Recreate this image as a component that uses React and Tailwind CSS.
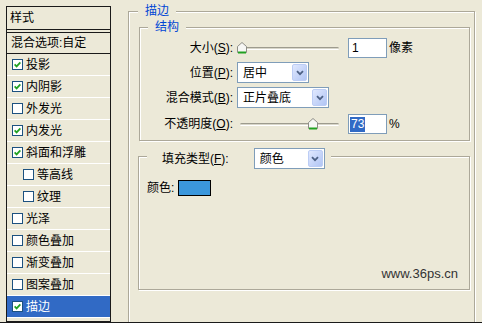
import React from 'react';

const styles = [
	{ t: '投影', c: true },
	{ t: '内阴影', c: true },
	{ t: '外发光' },
	{ t: '内发光', c: true },
	{ t: '斜面和浮雕', c: true },
	{ t: '等高线', sub: true },
	{ t: '纹理', sub: true },
	{ t: '光泽' },
	{ t: '颜色叠加' },
	{ t: '渐变叠加' },
	{ t: '图案叠加' },
	{ t: '描边', c: true, sel: true },
];

function Check({ checked }) {
	return (
		<span className="flex h-[11px] w-[11px] shrink-0 items-center justify-center border border-[#1c5180] bg-white">
			{checked && (
				<svg width="7" height="7" viewBox="0 0 7 7">
					<path d="M0.6 3.4 L2.6 5.4 L6.4 1.4" stroke="#21a121" strokeWidth="1.8" fill="none" />
				</svg>
			)}
		</span>
	);
}

function Select({ value, w }) {
	return (
		<div className={`flex h-[21px] items-center border border-[#7f9db9] bg-white pl-[5px] pr-[1px] ${w}`}>
			<span className="flex-1">{value}</span>
			<span className="flex h-[17px] w-[15px] items-center justify-center rounded-[2px] border border-[#bccdf5] bg-linear-to-br from-[#e0e8fe] to-[#b1c5f4]">
				<svg width="8" height="6" viewBox="0 0 8 6">
					<path d="M1 1.2 L4 4.2 L7 1.2" stroke="#4d6185" strokeWidth="1.8" fill="none" />
				</svg>
			</span>
		</div>
	);
}

function Slider({ pos }) {
	return (
		<div className="relative ml-[4px] flex h-[20px] w-[104px] items-center pl-[3px] pr-[2px]">
			<div className="h-[3px] w-full rounded-full border-t border-[#9d9b8e] border-b border-b-white bg-[#d8d6c9]" />
			<svg className={`absolute top-[4px] ${pos}`} width="10" height="12" viewBox="0 0 10 12">
				<path d="M0.5 4.5 L5 0.5 L9.5 4.5 L9.5 10.5 L0.5 10.5 Z" fill="#f7f7f4" stroke="#8d8d86" />
				<path d="M1 10.5 L9 10.5" stroke="#21a121" strokeWidth="2" />
			</svg>
		</div>
	);
}

export default function App() {
	return (
		<div className="flex h-[323px] w-[482px] overflow-hidden border-b border-[#1a1a1a] bg-[#ece9d8] font-['Liberation_Sans','Noto_Sans_CJK_SC',sans-serif] text-[12px] leading-[14px] text-black">
			{/* style list */}
			<div className="ml-[6px] mt-[6px] flex h-[316px] w-[105px] flex-col border border-[#1a1a1a]">
				<div className="flex h-[23px] items-center border-b border-[#1a1a1a] pl-[3px]">样式</div>
				<div className="mt-[2px] flex h-[22px] items-center border-y border-[#1a1a1a] pl-[4px]">混合选项:自定</div>
				{styles.map((s) => (
					<div
						key={s.t}
						className={`flex h-[22px] items-center gap-[3px] border-b border-white ${s.sub ? 'pl-[16px]' : 'pl-[5px]'} ${s.sel ? 'bg-[#316ac5] text-white' : ''}`}
					>
						<Check checked={s.c} />
						<span>{s.t}</span>
					</div>
				))}
			</div>

			{/* stroke settings */}
			<fieldset className="ml-[17px] mt-[4px] h-[340px] w-[347px] border border-[#aca899] shadow-[inset_1px_1px_0_#fff,1px_1px_0_#fff]">
				<legend className="ml-[9px] h-[14px] bg-[#ece9d8] px-[7px] leading-[14px] text-[#0046d5]">描边</legend>

				<fieldset className="ml-[10px] mt-[2px] w-[331px] border border-[#aca899] pb-[6px] shadow-[inset_1px_1px_0_#fff,1px_1px_0_#fff]">
					<legend className="ml-[8px] h-[14px] bg-[#ece9d8] px-[7px] leading-[14px] text-[#0046d5]">结构</legend>

					<div className="mt-[4px] flex h-[20px] items-center">
						<div className="w-[93px] text-right">大小(<u>S</u>):</div>
						<Slider pos="left-[0px]" />
						<div className="ml-[7px] flex h-[20px] w-[39px] items-center border border-[#7f9db9] bg-white pl-[3px]">1</div>
						<span className="ml-[2px]">像素</span>
					</div>

					<div className="mt-[4px] flex h-[21px] items-center">
						<div className="w-[93px] text-right">位置(<u>P</u>):</div>
						<div className="ml-[4px]">
							<Select value="居中" w="w-[72px]" />
						</div>
					</div>

					<div className="mt-[4px] flex h-[21px] items-center">
						<div className="w-[93px] text-right">混合模式(<u>B</u>):</div>
						<div className="ml-[4px]">
							<Select value="正片叠底" w="w-[92px]" />
						</div>
					</div>

					<div className="mt-[6px] flex h-[20px] items-center">
						<div className="w-[93px] text-right">不透明度(<u>O</u>):</div>
						<Slider pos="left-[71px]" />
						<div className="ml-[7px] flex h-[20px] w-[39px] items-center border border-[#7f9db9] bg-white pl-[1px]">
							<span className="bg-[#316ac5] px-[1px] leading-[15px] text-white">73</span>
						</div>
						<span className="ml-[2px]">%</span>
					</div>
				</fieldset>

				<fieldset className="ml-[9px] mt-[7px] h-[142px] w-[332px] border border-[#aca899] shadow-[inset_1px_1px_0_#fff,1px_1px_0_#fff]">
					<legend className="ml-[8px] flex h-[16px] items-start bg-[#ece9d8] pl-[15px] pr-[6px]">
						<span className="mt-[4px]">填充类型(<u>F</u>):</span>
						<div className="ml-[25px]">
							<Select value="颜色" w="w-[71px]" />
						</div>
					</legend>

					<div className="flex h-[125px] flex-col">
						<div className="mt-[16px] flex h-[16px] items-center pl-[8px]">
							<span>颜色:</span>
							<div className="ml-[4px] h-[16px] w-[33px] border border-black bg-[#3b97dc]" />
						</div>
						<div className="mt-auto flex justify-end pb-[8px] pr-[11px] font-['Liberation_Sans',sans-serif] text-[13px] leading-[15px] text-[#333]">
							www.36ps.cn
						</div>
					</div>
				</fieldset>
			</fieldset>
		</div>
	);
}
